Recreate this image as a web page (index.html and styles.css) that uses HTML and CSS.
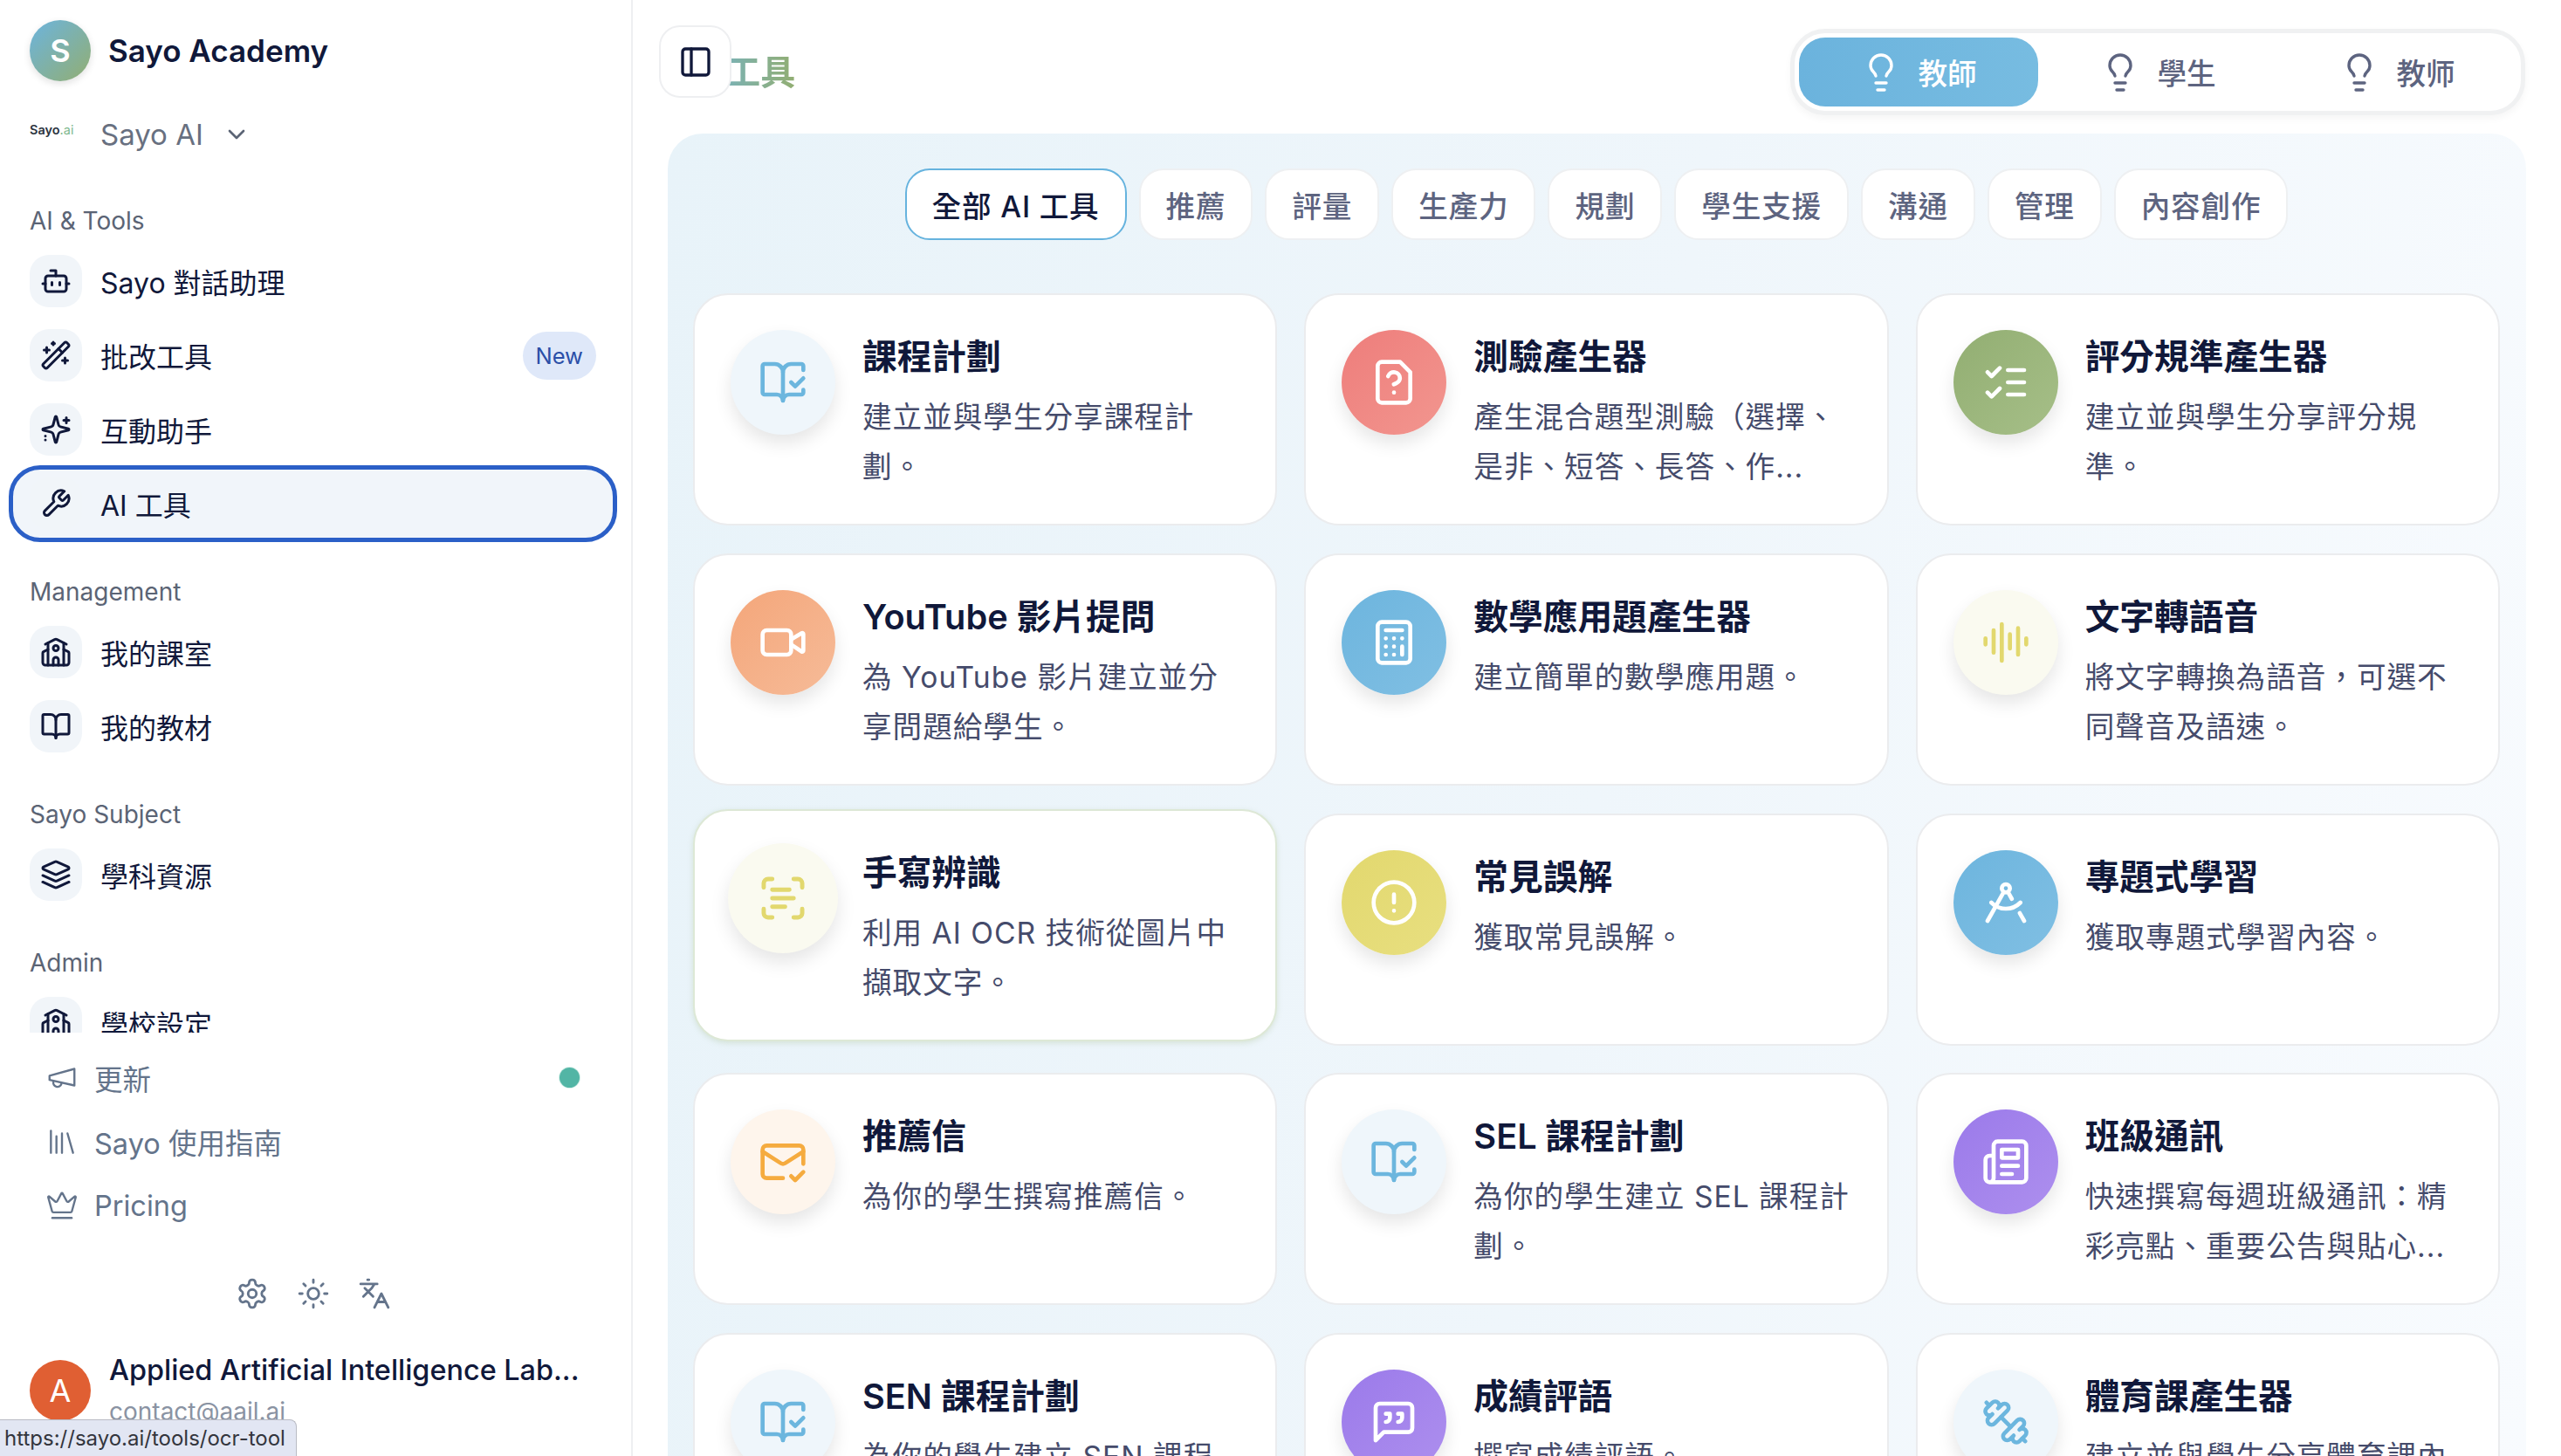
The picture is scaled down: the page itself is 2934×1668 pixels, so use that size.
FILE: index.html
```html
<!DOCTYPE html>
<html lang="zh-Hant">
<head>
  <meta charset="UTF-8">
  <meta name="viewport" content="width=device-width, initial-scale=1.0">
  <link rel="stylesheet" href="styles.css">
  <title>AI 工具</title>
</head>
<body>
  <!-- Icon sprite -->
  <svg class="sprite" xmlns="http://www.w3.org/2000/svg">
    <symbol id="i-bot" viewBox="0 0 24 24"><path d="M12 8V4H8"/><rect x="4" y="8" width="16" height="12" rx="2"/><path d="M2 14h2M20 14h2M15 13v2M9 13v2"/></symbol>
    <symbol id="i-wand" viewBox="0 0 24 24"><path d="m21.64 3.64-1.28-1.28a1.21 1.21 0 0 0-1.72 0L2.36 18.64a1.21 1.21 0 0 0 0 1.72l1.28 1.28a1.2 1.2 0 0 0 1.72 0L21.64 5.36a1.2 1.2 0 0 0 0-1.72"/><path d="m14 7 3 3M5 6v4M19 14v4M10 2v2M7 8H3M21 16h-4M11 3H9"/></symbol>
    <symbol id="i-sparkles" viewBox="0 0 24 24"><path d="M9.937 15.5A2 2 0 0 0 8.5 14.063l-6.135-1.582a.5.5 0 0 1 0-.962L8.5 9.936A2 2 0 0 0 9.937 8.5l1.582-6.135a.5.5 0 0 1 .963 0L14.063 8.5A2 2 0 0 0 15.5 9.937l6.135 1.581a.5.5 0 0 1 0 .964L15.5 14.063a2 2 0 0 0-1.437 1.437l-1.582 6.135a.5.5 0 0 1-.963 0z"/><path d="M20 3v4M22 5h-4M4 17v.01M4 20v.01"/></symbol>
    <symbol id="i-wrench" viewBox="0 0 24 24"><path d="M14.7 6.3a1 1 0 0 0 0 1.4l1.6 1.6a1 1 0 0 0 1.4 0l3.77-3.77a6 6 0 0 1-7.94 7.94l-6.91 6.91a2.12 2.12 0 0 1-3-3l6.91-6.91a6 6 0 0 1 7.94-7.94l-3.76 3.76z"/></symbol>
    <symbol id="i-school" viewBox="0 0 24 24"><path d="M14 22v-4a2 2 0 1 0-4 0v4"/><path d="m18 10 3.447 1.724a1 1 0 0 1 .553.894V20a2 2 0 0 1-2 2H4a2 2 0 0 1-2-2v-7.382a1 1 0 0 1 .553-.894L6 10"/><path d="M18 5v17M6 5v17"/><path d="m4 6 7.106-3.553a2 2 0 0 1 1.788 0L20 6"/><circle cx="12" cy="9" r="2"/></symbol>
    <symbol id="i-book" viewBox="0 0 24 24"><path d="M12 7v14"/><path d="M3 18a1 1 0 0 1-1-1V4a1 1 0 0 1 1-1h5a4 4 0 0 1 4 4 4 4 0 0 1 4-4h5a1 1 0 0 1 1 1v13a1 1 0 0 1-1 1h-6a3 3 0 0 0-3 3 3 3 0 0 0-3-3z"/></symbol>
    <symbol id="i-layers" viewBox="0 0 24 24"><path d="M12.83 2.18a2 2 0 0 0-1.66 0L2.6 6.08a1 1 0 0 0 0 1.83l8.58 3.91a2 2 0 0 0 1.66 0l8.58-3.9a1 1 0 0 0 0-1.83Z"/><path d="m22 17.65-9.17 4.16a2 2 0 0 1-1.66 0L2 17.65"/><path d="m22 12.65-9.17 4.16a2 2 0 0 1-1.66 0L2 12.65"/></symbol>
    <symbol id="i-megaphone" viewBox="0 0 24 24"><path d="m3 11 18-5v12L3 14v-3z"/><path d="M11.6 16.8a3 3 0 1 1-5.8-1.6"/></symbol>
    <symbol id="i-library" viewBox="0 0 24 24"><path d="m16 6 4 14M12 6v14M8 8v12M4 4v16"/></symbol>
    <symbol id="i-crown" viewBox="0 0 24 24"><path d="M11.562 3.266a.5.5 0 0 1 .876 0L15.39 8.87a1 1 0 0 0 1.516.294L21.183 5.5a.5.5 0 0 1 .798.519l-2.834 10.246a1 1 0 0 1-.956.734H5.81a1 1 0 0 1-.957-.734L2.02 6.02a.5.5 0 0 1 .798-.519l4.276 3.664a1 1 0 0 0 1.516-.294z"/><path d="M5 21h14"/></symbol>
    <symbol id="i-settings" viewBox="0 0 24 24"><path d="M12.22 2h-.44a2 2 0 0 0-2 2v.18a2 2 0 0 1-1 1.73l-.43.25a2 2 0 0 1-2 0l-.15-.08a2 2 0 0 0-2.73.73l-.22.38a2 2 0 0 0 .73 2.73l.15.1a2 2 0 0 1 1 1.72v.51a2 2 0 0 1-1 1.74l-.15.09a2 2 0 0 0-.73 2.73l.22.38a2 2 0 0 0 2.73.73l.15-.08a2 2 0 0 1 2 0l.43.25a2 2 0 0 1 1 1.73V20a2 2 0 0 0 2 2h.44a2 2 0 0 0 2-2v-.18a2 2 0 0 1 1-1.73l.43-.25a2 2 0 0 1 2 0l.15.08a2 2 0 0 0 2.73-.73l.22-.39a2 2 0 0 0-.73-2.73l-.15-.08a2 2 0 0 1-1-1.74v-.5a2 2 0 0 1 1-1.74l.15-.09a2 2 0 0 0 .73-2.73l-.22-.38a2 2 0 0 0-2.73-.73l-.15.08a2 2 0 0 1-2 0l-.43-.25a2 2 0 0 1-1-1.73V4a2 2 0 0 0-2-2z"/><circle cx="12" cy="12" r="3"/></symbol>
    <symbol id="i-sun" viewBox="0 0 24 24"><circle cx="12" cy="12" r="4"/><path d="M12 2v2M12 20v2m-7.07-17.07 1.41 1.41m11.32 11.32 1.41 1.41M2 12h2M20 12h2M6.34 17.66l-1.41 1.41M19.07 4.93l-1.41 1.41"/></symbol>
    <symbol id="i-lang" viewBox="0 0 24 24"><path d="m5 8 6 6M4 14l6-6 2-3M2 5h12M7 2h1M22 22l-5-10-5 10M14 18h6"/></symbol>
    <symbol id="i-panel" viewBox="0 0 24 24"><rect x="3" y="3" width="18" height="18" rx="2"/><path d="M9 3v18"/></symbol>
    <symbol id="i-bulb" viewBox="0 0 24 24"><path d="M15 14c.2-1 .7-1.7 1.5-2.5 1-.9 1.5-2.2 1.5-3.5A6 6 0 0 0 6 8c0 1 .2 2.2 1.5 3.5.7.7 1.3 1.5 1.5 2.5"/><path d="M9 18h6M10 22h4"/></symbol>
    <symbol id="i-chevron" viewBox="0 0 24 24"><path d="m6 9 6 6 6-6"/></symbol>
    <symbol id="i-book-check" viewBox="0 0 24 24"><path d="M12 21V7M16 12l2 2 4-4"/><path d="M22 6V4a1 1 0 0 0-1-1h-5a4 4 0 0 0-4 4 4 4 0 0 0-4-4H3a1 1 0 0 0-1 1v13a1 1 0 0 0 1 1h6a3 3 0 0 1 3 3 3 3 0 0 1 3-3h6a1 1 0 0 0 1-1v-1.3"/></symbol>
    <symbol id="i-file-q" viewBox="0 0 24 24"><path d="M12 17h.01"/><path d="M15 2H6a2 2 0 0 0-2 2v16a2 2 0 0 0 2 2h12a2 2 0 0 0 2-2V7z"/><path d="M9.1 9a3 3 0 0 1 5.82 1c0 2-3 3-3 3"/></symbol>
    <symbol id="i-list" viewBox="0 0 24 24"><path d="m3 17 2 2 4-4M3 7l2 2 4-4M13 6h8M13 12h8M13 18h8"/></symbol>
    <symbol id="i-video" viewBox="0 0 24 24"><path d="m16 13 5.223 3.482a.5.5 0 0 0 .777-.416V7.87a.5.5 0 0 0-.752-.432L16 10.5"/><rect x="2" y="6" width="14" height="12" rx="2"/></symbol>
    <symbol id="i-calc" viewBox="0 0 24 24"><rect x="4" y="2" width="16" height="20" rx="2"/><path d="M8 6h8M16 14v4M16 10h.01M12 10h.01M8 10h.01M12 14h.01M8 14h.01M12 18h.01M8 18h.01"/></symbol>
    <symbol id="i-audio" viewBox="0 0 24 24"><path d="M2 10v3M6 6v11M10 3v18M14 8v7M18 5v13M22 10v3"/></symbol>
    <symbol id="i-scan" viewBox="0 0 24 24"><path d="M3 7V5a2 2 0 0 1 2-2h2M17 3h2a2 2 0 0 1 2 2v2M21 17v2a2 2 0 0 1-2 2h-2M7 21H5a2 2 0 0 1-2-2v-2M7 8h8M7 12h10M7 16h6"/></symbol>
    <symbol id="i-alert" viewBox="0 0 24 24"><circle cx="12" cy="12" r="10"/><path d="M12 8v4M12 16h.01"/></symbol>
    <symbol id="i-compass" viewBox="0 0 24 24"><path d="m12.99 6.74 1.93 3.44M19.136 12a10 10 0 0 1-14.271 0M21 21l-2.16-3.84M3 21l8.02-14.26"/><circle cx="12" cy="5" r="2"/></symbol>
    <symbol id="i-mail" viewBox="0 0 24 24"><path d="M22 13V6a2 2 0 0 0-2-2H4a2 2 0 0 0-2 2v12c0 1.1.9 2 2 2h8"/><path d="m22 7-8.97 5.7a1.94 1.94 0 0 1-2.06 0L2 7M16 19l2 2 4-4"/></symbol>
    <symbol id="i-news" viewBox="0 0 24 24"><path d="M4 22h16a2 2 0 0 0 2-2V4a2 2 0 0 0-2-2H8a2 2 0 0 0-2 2v16a2 2 0 0 1-2 2Zm0 0a2 2 0 0 1-2-2v-9c0-1.1.9-2 2-2h2"/><path d="M18 14h-8M15 18h-5M10 6h8v4h-8V6Z"/></symbol>
    <symbol id="i-quote" viewBox="0 0 24 24"><path d="M21 15a2 2 0 0 1-2 2H7l-4 4V5a2 2 0 0 1 2-2h14a2 2 0 0 1 2 2z"/><path d="M8 12a2 2 0 0 0 2-2V8H8M14 12a2 2 0 0 0 2-2V8h-2"/></symbol>
    <symbol id="i-dumbbell" viewBox="0 0 24 24"><path d="M14.4 14.4 9.6 9.6"/><path d="M18.657 21.485a2 2 0 1 1-2.829-2.828l-1.767 1.768a2 2 0 1 1-2.829-2.829l6.364-6.364a2 2 0 1 1 2.829 2.829l-1.768 1.767a2 2 0 1 1 2.828 2.829z"/><path d="m21.5 21.5-1.4-1.4M3.9 3.9 2.5 2.5"/><path d="M6.404 12.768a2 2 0 1 1-2.829-2.829l1.768-1.767a2 2 0 1 1-2.828-2.829l2.828-2.828a2 2 0 1 1 2.829 2.828l1.767-1.768a2 2 0 1 1 2.829 2.829z"/></symbol>
  </svg>

  <div class="app">
    <!-- Sidebar -->
    <aside class="sidebar">
      <div class="brand">
        <span class="avatar avatar-brand">S</span>
        <span class="brand-name">Sayo Academy</span>
      </div>
      <div class="workspace">
        <span class="workspace-logo">Sayo<em>.ai</em></span>
        <span class="workspace-name">Sayo AI</span>
        <svg class="icon workspace-chevron"><use href="#i-chevron"/></svg>
      </div>

      <div class="sidebar-scroll">
        <section class="nav-section">
          <h2 class="nav-label">AI &amp; Tools</h2>
          <a class="nav-item"><span class="nav-icon"><svg class="icon"><use href="#i-bot"/></svg></span>Sayo 對話助理</a>
          <a class="nav-item"><span class="nav-icon"><svg class="icon"><use href="#i-wand"/></svg></span>批改工具<span class="badge">New</span></a>
          <a class="nav-item"><span class="nav-icon"><svg class="icon"><use href="#i-sparkles"/></svg></span>互動助手</a>
          <a class="nav-item active"><span class="nav-icon"><svg class="icon"><use href="#i-wrench"/></svg></span>AI 工具</a>
        </section>
        <section class="nav-section">
          <h2 class="nav-label">Management</h2>
          <a class="nav-item"><span class="nav-icon"><svg class="icon"><use href="#i-school"/></svg></span>我的課室</a>
          <a class="nav-item"><span class="nav-icon"><svg class="icon"><use href="#i-book"/></svg></span>我的教材</a>
        </section>
        <section class="nav-section">
          <h2 class="nav-label">Sayo Subject</h2>
          <a class="nav-item"><span class="nav-icon"><svg class="icon"><use href="#i-layers"/></svg></span>學科資源</a>
        </section>
        <section class="nav-section">
          <h2 class="nav-label">Admin</h2>
          <a class="nav-item"><span class="nav-icon"><svg class="icon"><use href="#i-school"/></svg></span>學校設定</a>
        </section>
      </div>

      <div class="sidebar-footer">
        <a class="foot-link"><svg class="icon"><use href="#i-megaphone"/></svg>更新<span class="foot-dot"></span></a>
        <a class="foot-link"><svg class="icon"><use href="#i-library"/></svg>Sayo 使用指南</a>
        <a class="foot-link"><svg class="icon"><use href="#i-crown"/></svg>Pricing</a>
        <div class="foot-tools">
          <svg class="icon"><use href="#i-settings"/></svg>
          <svg class="icon"><use href="#i-sun"/></svg>
          <svg class="icon"><use href="#i-lang"/></svg>
        </div>
        <div class="user">
          <span class="avatar avatar-user">A</span>
          <div class="user-text">
            <div class="user-name">Applied Artificial Intelligence Lab...</div>
            <div class="user-mail">contact@aail.ai</div>
          </div>
        </div>
      </div>
    </aside>

    <!-- Main -->
    <main class="main">
      <button class="panel-toggle"><svg class="icon"><use href="#i-panel"/></svg></button>
      <header class="topbar">
        <h1 class="page-title">AI 工具</h1>
        <div class="roles">
          <span class="role active"><svg class="icon"><use href="#i-bulb"/></svg>教師</span>
          <span class="role"><svg class="icon"><use href="#i-bulb"/></svg>學生</span>
          <span class="role"><svg class="icon"><use href="#i-bulb"/></svg>教师</span>
        </div>
      </header>

      <div class="panel">
        <nav class="tabs">
          <a class="tab active">全部 AI 工具</a>
          <a class="tab">推薦</a>
          <a class="tab">評量</a>
          <a class="tab">生產力</a>
          <a class="tab">規劃</a>
          <a class="tab">學生支援</a>
          <a class="tab">溝通</a>
          <a class="tab">管理</a>
          <a class="tab">內容創作</a>
        </nav>

        <div class="tool-grid">
          <article class="card">
            <span class="tool-icon tone-sky"><svg class="icon"><use href="#i-book-check"/></svg></span>
            <div class="card-text"><h3>課程計劃</h3><p>建立並與學生分享課程計劃。</p></div>
          </article>
          <article class="card">
            <span class="tool-icon tone-red"><svg class="icon"><use href="#i-file-q"/></svg></span>
            <div class="card-text"><h3>測驗產生器</h3><p>產生混合題型測驗&#xFF08;選擇、是非、短答、長答、作...</p></div>
          </article>
          <article class="card">
            <span class="tool-icon tone-green"><svg class="icon"><use href="#i-list"/></svg></span>
            <div class="card-text"><h3>評分規準產生器</h3><p>建立並與學生分享評分規準。</p></div>
          </article>

          <article class="card">
            <span class="tool-icon tone-orange"><svg class="icon"><use href="#i-video"/></svg></span>
            <div class="card-text"><h3>YouTube 影片提問</h3><p>為 YouTube 影片建立並分享問題給學生。</p></div>
          </article>
          <article class="card">
            <span class="tool-icon tone-blue"><svg class="icon"><use href="#i-calc"/></svg></span>
            <div class="card-text"><h3>數學應用題產生器</h3><p>建立簡單的數學應用題。</p></div>
          </article>
          <article class="card">
            <span class="tool-icon tone-cream"><svg class="icon"><use href="#i-audio"/></svg></span>
            <div class="card-text"><h3>文字轉語音</h3><p>將文字轉換為語音&#xFF0C;可選不同聲音及語速。</p></div>
          </article>

          <article class="card hovered">
            <span class="tool-icon tone-cream"><svg class="icon"><use href="#i-scan"/></svg></span>
            <div class="card-text"><h3>手寫辨識</h3><p>利用 AI OCR 技術從圖片中擷取文字。</p></div>
          </article>
          <article class="card">
            <span class="tool-icon tone-yellow"><svg class="icon"><use href="#i-alert"/></svg></span>
            <div class="card-text"><h3>常見誤解</h3><p>獲取常見誤解。</p></div>
          </article>
          <article class="card">
            <span class="tool-icon tone-blue"><svg class="icon"><use href="#i-compass"/></svg></span>
            <div class="card-text"><h3>專題式學習</h3><p>獲取專題式學習內容。</p></div>
          </article>

          <article class="card">
            <span class="tool-icon tone-peach"><svg class="icon"><use href="#i-mail"/></svg></span>
            <div class="card-text"><h3>推薦信</h3><p>為你的學生撰寫推薦信。</p></div>
          </article>
          <article class="card">
            <span class="tool-icon tone-sky"><svg class="icon"><use href="#i-book-check"/></svg></span>
            <div class="card-text"><h3>SEL 課程計劃</h3><p>為你的學生建立 SEL 課程計劃。</p></div>
          </article>
          <article class="card">
            <span class="tool-icon tone-purple"><svg class="icon"><use href="#i-news"/></svg></span>
            <div class="card-text"><h3>班級通訊</h3><p>快速撰寫每週班級通訊&#xFF1A;精彩亮點、重要公告與貼心...</p></div>
          </article>

          <article class="card">
            <span class="tool-icon tone-sky"><svg class="icon"><use href="#i-book-check"/></svg></span>
            <div class="card-text"><h3>SEN 課程計劃</h3><p>為你的學生建立 SEN 課程計劃。</p></div>
          </article>
          <article class="card">
            <span class="tool-icon tone-purple"><svg class="icon"><use href="#i-quote"/></svg></span>
            <div class="card-text"><h3>成績評語</h3><p>撰寫成績評語。</p></div>
          </article>
          <article class="card">
            <span class="tool-icon tone-sky"><svg class="icon"><use href="#i-dumbbell"/></svg></span>
            <div class="card-text"><h3>體育課產生器</h3><p>建立並與學生分享體育課內容。</p></div>
          </article>
        </div>
      </div>
    </main>
  </div>

  <!-- Browser status bubble -->
  <div class="status-url">https://sayo.ai/tools/ocr-tool</div>
</body>
</html>
```

FILE: styles.css
```css
/* General Styles */
* {
  box-sizing: border-box;
}

body {
  margin: 0;
  height: 100vh;
  overflow: hidden;
  background: #fff;
  color: #10183a;
  font-family: Inter, "Noto Sans CJK TC", sans-serif;
}

h1, h2, h3, p {
  margin: 0;
}

.sprite {
  display: none;
}

.icon {
  width: 36px;
  height: 36px;
  flex: none;
  fill: none;
  stroke: currentColor;
  stroke-width: 2;
  stroke-linecap: round;
  stroke-linejoin: round;
}

.app {
  display: flex;
  height: 100vh;
}

/* Sidebar */
.sidebar {
  width: 725px;
  flex: none;
  display: flex;
  flex-direction: column;
  border-right: 2px solid #eeeff1;
  padding-top: 23px;
}

.avatar {
  width: 70px;
  height: 70px;
  flex: none;
  border-radius: 50%;
  display: flex;
  align-items: center;
  justify-content: center;
  color: #fff;
  font-size: 36px;
  font-weight: 600;
}

.avatar-brand {
  background: linear-gradient(135deg, #6cb4de, #92ae72);
  box-shadow: 0 3px 8px rgba(0, 0, 0, 0.12);
}

.avatar-user {
  background: #e05f33;
  font-weight: 400;
}

.brand {
  display: flex;
  align-items: center;
  gap: 20px;
  padding-left: 34px;
}

.brand-name {
  font-size: 35px;
  font-weight: 600;
  color: #10183a;
}

.workspace {
  display: flex;
  align-items: center;
  height: 60px;
  margin-top: 31px;
  padding-left: 34px;
}

.workspace-logo {
  width: 81px;
  margin-top: -12px;
  font-size: 14.5px;
  font-weight: 600;
  color: #2c3440;
}

.workspace-logo em {
  font-style: normal;
  font-weight: 400;
  color: #7fb98f;
}

.workspace-name {
  font-size: 33px;
  color: #687080;
}

.workspace-chevron {
  width: 32px;
  height: 32px;
  margin-left: 22px;
  color: #5b6475;
}

.sidebar-scroll {
  flex: 1;
  min-height: 0;
  overflow: hidden;
  padding: 49px 16px 0 10px;
}

.nav-section + .nav-section {
  margin-top: 37px;
}

.nav-label {
  height: 40px;
  margin: 0 0 5px 24px;
  font-size: 28px;
  font-weight: 400;
  line-height: 40px;
  color: #5b6475;
}

.nav-item {
  height: 88px;
  margin-bottom: -3px;
  padding: 0 19px;
  display: flex;
  align-items: center;
  gap: 21px;
  border: 5px solid transparent;
  border-radius: 36px;
  font-size: 32px;
  color: #10183a;
}

.nav-item:last-child {
  margin-bottom: 0;
}

.nav-item.active {
  border-color: #2b5fc7;
  background: #f1f5fa;
}

.nav-icon {
  width: 60px;
  height: 60px;
  flex: none;
  display: flex;
  align-items: center;
  justify-content: center;
  border-radius: 22px;
  background: #f1f5f9;
}

.badge {
  margin-left: auto;
  padding: 0 15px;
  height: 55px;
  display: flex;
  align-items: center;
  border-radius: 28px;
  background: #dfe8f9;
  color: #2b4fa8;
  font-size: 25.5px;
}

.sidebar-footer {
  flex: none;
  padding: 15px 0 40px;
}

.foot-link {
  height: 73.5px;
  padding: 0 59px 0 52px;
  display: flex;
  align-items: center;
  gap: 18px;
  font-size: 32.5px;
  color: #64748b;
}

.foot-link .icon {
  width: 38px;
  height: 38px;
  stroke-width: 1.5;
}

.foot-dot {
  margin-left: auto;
  width: 23px;
  height: 23px;
  border-radius: 50%;
  background: #52b5a5;
  box-shadow: 0 0 0 1px #d5efe9;
}

.foot-tools {
  height: 40px;
  margin-top: 45px;
  padding-right: 5px;
  display: flex;
  justify-content: center;
  gap: 32px;
  color: #64748b;
}

.foot-tools .icon {
  width: 38px;
  height: 38px;
  stroke-width: 1.8;
}

.user {
  height: 70px;
  margin-top: 55px;
  padding: 0 40px 0 34px;
  display: flex;
  align-items: center;
  gap: 21px;
}

.user-text {
  flex: 1;
  min-width: 0;
}

.user-name {
  font-size: 32.4px;
  font-weight: 500;
  line-height: 44px;
  white-space: nowrap;
}

.user-mail {
  margin-top: 3px;
  font-size: 28px;
  line-height: 44px;
  color: #8a93a3;
}

.status-url {
  position: fixed;
  left: 0;
  bottom: 0;
  width: 340px;
  height: 42px;
  padding-left: 5px;
  border: 1px solid #b9bbc4;
  border-left: 0;
  border-bottom: 0;
  border-top-right-radius: 8px;
  background: #e2e6f3;
  color: #33353d;
  font-size: 24px;
  line-height: 41px;
  white-space: nowrap;
}

/* Main */
.main {
  position: relative;
  flex: 1;
  min-width: 0;
  display: flex;
  flex-direction: column;
  padding: 0 40px;
}

.panel-toggle {
  position: absolute;
  left: 30px;
  top: 29px;
  z-index: 5;
  width: 83px;
  height: 83px;
  display: flex;
  align-items: center;
  justify-content: center;
  padding: 0;
  border: 2px solid #eeeff1;
  border-radius: 24px;
  background: #fff;
  color: #10183a;
}

.panel-toggle .icon {
  width: 40px;
  height: 40px;
}

.topbar {
  height: 153px;
  flex: none;
  display: flex;
  justify-content: space-between;
}

.page-title {
  margin: 56px 0 0 16px;
  font-size: 40px;
  font-weight: 600;
  line-height: 54px;
  background: linear-gradient(90deg, #6cb4de, #92ae72);
  -webkit-background-clip: text;
  background-clip: text;
  color: transparent;
}

.roles {
  width: 842px;
  height: 99px;
  margin: 33px 1px 0 0;
  padding: 5px;
  display: flex;
  border: 5px solid #f0f1f2;
  border-radius: 40px;
  background: #fff;
  box-shadow: 0 4px 8px rgba(0, 0, 0, 0.04);
}

.role {
  flex: 1;
  display: flex;
  align-items: center;
  justify-content: center;
  gap: 18px;
  border-radius: 30px;
  font-size: 33.6px;
  font-weight: 500;
  color: #5d6480;
}

.role .icon {
  width: 48px;
  height: 48px;
  stroke-width: 1.7;
}

.role.active {
  background: linear-gradient(90deg, #6bb3dd, #77bce1);
  color: #fff;
}

.panel {
  flex: 1;
  min-height: 0;
  overflow: hidden;
  padding: 40px 30px 0 29px;
  border-radius: 40px 40px 0 0;
  background: linear-gradient(100deg, #e8f3f9, #eff6fb 50%, #f8fbfe);
}

.tabs {
  display: flex;
  justify-content: center;
  gap: 14px;
}

.tab {
  height: 82px;
  padding: 0 29px;
  display: flex;
  align-items: center;
  border: 2px solid #eef0f2;
  border-radius: 28px;
  background: #fff;
  font-size: 33.6px;
  font-weight: 500;
  letter-spacing: 0.025em;
  color: #5d6480;
}

.tab.active {
  border-color: #66b3de;
  color: #10183a;
}

.tool-grid {
  margin-top: 61px;
  display: grid;
  grid-template-columns: repeat(3, 1fr);
  grid-auto-rows: 266px;
  gap: 31.75px 31px;
}

.card {
  padding: 40px 41px;
  display: flex;
  gap: 31px;
  border: 2px solid #ebecee;
  border-radius: 40px;
  background: #fff;
}

.card-text {
  min-width: 0;
  padding-top: 2px;
}

.card h3 {
  font-size: 39.7px;
  font-weight: 600;
  line-height: 58px;
  color: #10183a;
}

.card p {
  margin-top: 11px;
  font-size: 33.6px;
  line-height: 57px;
  letter-spacing: 0.03em;
  color: #454b6b;
}

.card.hovered {
  transform: translateY(-5px);
  border-color: #dde8d6;
  box-shadow: 0 2px 6px rgba(146, 174, 114, 0.25);
}

.card.hovered .tool-icon {
  transform: scale(1.05);
}

.tool-icon {
  width: 120px;
  height: 120px;
  flex: none;
  display: flex;
  align-items: center;
  justify-content: center;
  border-radius: 50%;
  color: #fff;
  box-shadow: 0 10px 20px rgba(0, 0, 0, 0.1);
}

.tool-icon .icon {
  width: 56px;
  height: 56px;
}

/* Tool icon colours */
.tone-sky { background: #eff6fb; color: #6cb6de; }
.tone-cream { background: #fafaf0; color: #e2d86e; }
.tone-peach { background: #fef5ec; color: #f5ab3f; }
.tone-red { background: linear-gradient(135deg, #ee7d7b, #f2968f); }
.tone-green { background: linear-gradient(135deg, #92ae72, #a6bf88); }
.tone-orange { background: linear-gradient(135deg, #f4a67a, #f6bb98); }
.tone-blue { background: linear-gradient(135deg, #6db5de, #80bfe3); }
.tone-yellow { background: linear-gradient(135deg, #e2d86e, #e8df80); }
.tone-purple { background: linear-gradient(135deg, #9b7aea, #ad8fee); }
```
